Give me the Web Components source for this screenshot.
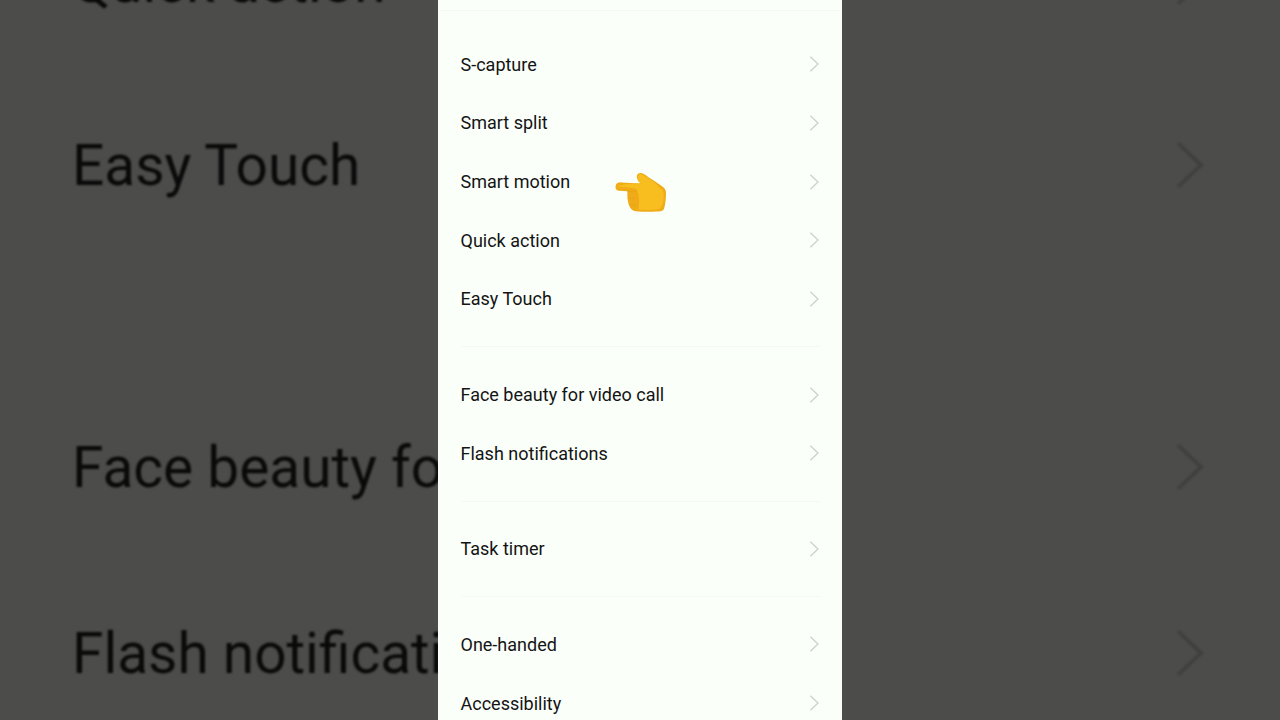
<!DOCTYPE html>
<html>
<head>
<meta charset="utf-8">
<style>
  html, body { margin: 0; padding: 0; width: 1280px; height: 720px; overflow: hidden; background: #4c4c4a; }
</style>
</head>
<body>
<settings-stage>
  <settings-list slot="back">
    <settings-row style="--row-height: 180px">Quick action</settings-row>
    <settings-row>Easy Touch</settings-row>
    <settings-gap></settings-gap>
    <settings-row>Face beauty fo</settings-row>
    <settings-row>Flash notificati</settings-row>
  </settings-list>
  <settings-list slot="panel">
    <settings-gap wide></settings-gap>
    <settings-row>S-capture</settings-row>
    <settings-row>Smart split</settings-row>
    <settings-row>Smart motion</settings-row>
    <settings-row>Quick action</settings-row>
    <settings-row>Easy Touch</settings-row>
    <settings-gap></settings-gap>
    <settings-row>Face beauty for video call</settings-row>
    <settings-row>Flash notifications</settings-row>
    <settings-gap></settings-gap>
    <settings-row>Task timer</settings-row>
    <settings-gap></settings-gap>
    <settings-row>One-handed</settings-row>
    <settings-row>Accessibility</settings-row>
  </settings-list>
  <pointing-hand slot="overlay"></pointing-hand>
</settings-stage>

<script>
const stageTemplate = document.createElement('template');
stageTemplate.innerHTML = `
  <style>
    :host {
      display: grid;
      width: 1280px;
      height: 720px;
      overflow: hidden;
      position: relative;
      background: #4c4c4a;
      font-family: Roboto, "Liberation Sans", sans-serif;
    }
    .back {
      grid-area: 1 / 1;
      margin-top: -108px;
      filter: blur(0.8px);
      --row-height: 186px;
      --row-font: 56.8px;
      --row-pad-left: 72px;
      --row-pad-right: 67px;
      --row-color: #0a0a0a;
      --chevron-size: 48px;
      --chevron-color: #3e403d;
      --chevron-width: 1.1;
      --gap-height: 116px;
      --gap-line: transparent;
    }
    .panel {
      grid-area: 1 / 1;
      z-index: 1;
      justify-self: center;
      width: 404px;
      margin-top: -8px;
      background: #fafffa;
      --row-height: 58.7px;
      --row-font: 18px;
      --row-pad-left: 22.5px;
      --row-pad-right: 20.4px;
      --row-color: #141414;
      --chevron-size: 16px;
      --chevron-color: #cdd1cd;
      --chevron-width: 1.3;
      --gap-height: 36.9px;
      --gap-pad-left: 23px;
      --gap-pad-right: 22px;
      --gap-line: #f5f9f5;
    }
    ::slotted(pointing-hand) { z-index: 2; }
  </style>
  <div class="back"><slot name="back"></slot></div>
  <div class="panel"><slot name="panel"></slot></div>
  <slot name="overlay"></slot>
`;

class SettingsStage extends HTMLElement {
  constructor() {
    super();
    this.attachShadow({ mode: 'open' }).appendChild(stageTemplate.content.cloneNode(true));
  }
}

const listTemplate = document.createElement('template');
listTemplate.innerHTML = `
  <style>
    :host { display: flex; flex-direction: column; }
  </style>
  <slot></slot>
`;

class SettingsList extends HTMLElement {
  constructor() {
    super();
    this.attachShadow({ mode: 'open' }).appendChild(listTemplate.content.cloneNode(true));
  }
}

const rowTemplate = document.createElement('template');
rowTemplate.innerHTML = `
  <style>
    :host {
      display: flex;
      align-items: center;
      justify-content: space-between;
      flex: none;
      height: var(--row-height);
      padding: 0 var(--row-pad-right) 0 var(--row-pad-left);
      font-size: var(--row-font);
      color: var(--row-color);
      white-space: nowrap;
    }
    svg {
      flex: none;
      width: var(--chevron-size);
      height: var(--chevron-size);
      stroke: var(--chevron-color);
      stroke-width: var(--chevron-width);
      fill: none;
    }
  </style>
  <span><slot></slot></span>
  <svg viewBox="0 0 16 16"><path d="M4.4 .8 L12 8 L4.4 15.2"/></svg>
`;

class SettingsRow extends HTMLElement {
  constructor() {
    super();
    this.attachShadow({ mode: 'open' }).appendChild(rowTemplate.content.cloneNode(true));
  }
}

const gapTemplate = document.createElement('template');
gapTemplate.innerHTML = `
  <style>
    :host {
      display: flex;
      align-items: center;
      flex: none;
      height: var(--gap-height);
      padding: 0 var(--gap-pad-right, 0) 0 var(--gap-pad-left, 0);
    }
    :host([wide]) { padding: 0 2px; margin-bottom: 6px; }
    div { flex: 1; height: 1px; background: var(--gap-line); }
  </style>
  <div></div>
`;

class SettingsGap extends HTMLElement {
  constructor() {
    super();
    this.attachShadow({ mode: 'open' }).appendChild(gapTemplate.content.cloneNode(true));
  }
}

const handTemplate = document.createElement('template');
handTemplate.innerHTML = `
  <style>
    :host {
      position: absolute;
      left: 613px;
      top: 170px;
      width: 57px;
      height: 46px;
      display: block;
    }
    svg { display: block; width: 100%; height: 100%; filter: blur(0.3px); }
  </style>
  <svg viewBox="70 60 170 137">
    <!-- palm, thumb and index finger -->
    <path fill="#f0ac18" d="M150 69 C158 68 166 74 178 83 C190 90 200 96 210 104 C222 112 229 118 228 130
      C228 148 226 165 222 176 C220 182 212 184 200 184 C180 185 155 185 138 183 C128 182 122 176 118 166
      C114 156 112 140 113 123 C104 123 95 123 87 122 C79 121 76 114 78 106 C80 98 88 96 96 97
      C112 98 132 99 152 100 C148 95 142 90 141 82 C140 75 144 70 150 69 Z"/>
    <!-- lighter back of the hand -->
    <path fill="#f8bd1f" d="M152 100 C170 102 190 104 208 112 C218 118 222 126 221 140 C220 156 218 168 208 176
      C190 180 165 180 145 178 C150 160 150 130 138 116 C128 112 105 112 84 110 C95 100 135 100 152 100 Z"/>
    <path fill="#f8bd1f" d="M150 72 C156 71 165 78 178 87 C190 94 198 100 208 112 L152 100 C147 95 144 90 144 83 C144 77 146 73 150 72 Z"/>
    <!-- curled fingers -->
    <path fill="none" stroke="#e3a014" stroke-width="2" stroke-linecap="round" d="M113 123 C122 124 134 124 141 122
      M116 144 C124 145 131 145 138 143 M120 163 C126 165 132 165 138 163"/>
  </svg>
`;

class PointingHand extends HTMLElement {
  constructor() {
    super();
    this.attachShadow({ mode: 'open' }).appendChild(handTemplate.content.cloneNode(true));
  }
}

customElements.define('settings-stage', SettingsStage);
customElements.define('settings-list', SettingsList);
customElements.define('settings-row', SettingsRow);
customElements.define('settings-gap', SettingsGap);
customElements.define('pointing-hand', PointingHand);
</script>
</body>
</html>
